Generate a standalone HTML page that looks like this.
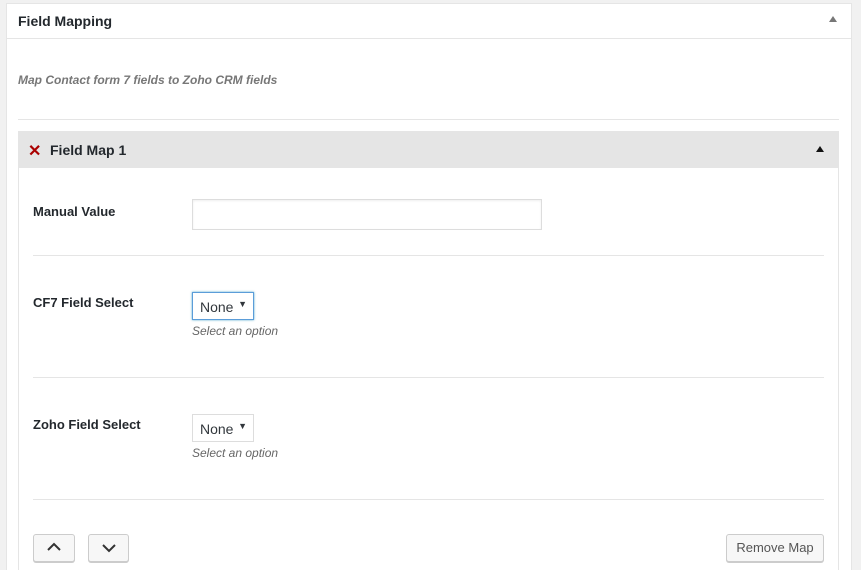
<!DOCTYPE html>
<html style="margin:0;width:861px;height:570px;overflow:hidden"><head><style>
body{margin:0;width:861px;height:570px;background:#f1f1f1;font-family:"Liberation Sans",sans-serif;overflow:hidden;position:relative;color:#23282d}
.abs{position:absolute}
.panel{left:6px;top:3px;width:844px;height:570px;background:#fff;border:1px solid #e5e5e5;border-bottom:none}
.hline{height:1px;background:#e5e5e5}
.lbl{font-size:13px;font-weight:bold;color:#23282d}
.sel{width:60px;height:26px;border:1px solid #ddd;background:#fff;font-size:14px;box-sizing:border-box;padding:6px 0 0 7px;color:#32373c}
.sel span{position:absolute;right:6px;top:6px;font-size:9px}
.hint{font-size:12px;font-style:italic;color:#666}
.btn{height:28px;border:1px solid #ccc;border-radius:3px;background:#f7f7f7;box-sizing:border-box;box-shadow:0 1px 0 #ccc}
</style></head><body>
<div class="abs panel"></div>
<div class="abs" style="left:18px;top:13px;font-size:14px;font-weight:bold;color:#23282d">Field Mapping</div>
<div class="abs" style="left:829px;top:16px;width:0;height:0;border-left:4px solid transparent;border-right:4px solid transparent;border-bottom:6px solid #777"></div>
<div class="abs hline" style="left:7px;top:38px;width:844px"></div>
<div class="abs" style="left:18px;top:73px;font-size:12px;font-style:italic;font-weight:bold;color:#777">Map Contact form 7 fields to Zoho CRM fields</div>
<div class="abs hline" style="left:18px;top:119px;width:821px"></div>
<div class="abs" style="left:18px;top:131px;width:819px;height:439px;border:1px solid #e5e5e5;border-bottom:none;background:#fff"></div>
<div class="abs" style="left:18px;top:131px;width:821px;height:37px;background:#e5e5e5"></div>
<div class="abs" style="left:28px;top:141px;font-size:16px;font-weight:bold;color:#a00">✕</div>
<div class="abs" style="left:50px;top:142px;font-size:14px;font-weight:bold;color:#23282d">Field Map 1</div>
<div class="abs" style="left:816px;top:146px;width:0;height:0;border-left:4px solid transparent;border-right:4px solid transparent;border-bottom:6px solid #111"></div>

<div class="abs lbl" style="left:33px;top:204px">Manual Value</div>
<div class="abs" style="left:192px;top:199px;width:350px;height:31px;border:1px solid #ddd;box-sizing:border-box;box-shadow:inset 0 1px 2px rgba(0,0,0,.07)"></div>
<div class="abs hline" style="left:33px;top:255px;width:791px"></div>

<div class="abs lbl" style="left:33px;top:295px">CF7 Field Select</div>
<div class="abs sel" style="left:192px;top:292px;width:62px;height:28px;border-color:#5b9dd9;box-shadow:0 0 2px rgba(30,140,190,.8)">None<span>▼</span></div>
<div class="abs hint" style="left:192px;top:324px">Select an option</div>
<div class="abs hline" style="left:33px;top:377px;width:791px"></div>

<div class="abs lbl" style="left:33px;top:417px">Zoho Field Select</div>
<div class="abs sel" style="left:192px;top:414px;width:62px;height:28px">None<span>▼</span></div>
<div class="abs hint" style="left:192px;top:446px">Select an option</div>
<div class="abs hline" style="left:33px;top:499px;width:791px"></div>

<div class="abs btn" style="left:33px;top:534px;width:42px">
<svg width="40" height="26" style="position:absolute;left:0;top:0"><path d="M14 15 L20 9 L26 15" fill="none" stroke="#333" stroke-width="2"/></svg></div>
<div class="abs btn" style="left:88px;top:534px;width:41px">
<svg width="40" height="26" style="position:absolute;left:0;top:0"><path d="M14 10 L20 16 L26 10" fill="none" stroke="#333" stroke-width="2"/></svg></div>
<div class="abs btn" style="left:726px;top:534px;width:98px;font-size:13px;color:#555;text-align:center;line-height:26px">Remove Map</div>
</body></html>
